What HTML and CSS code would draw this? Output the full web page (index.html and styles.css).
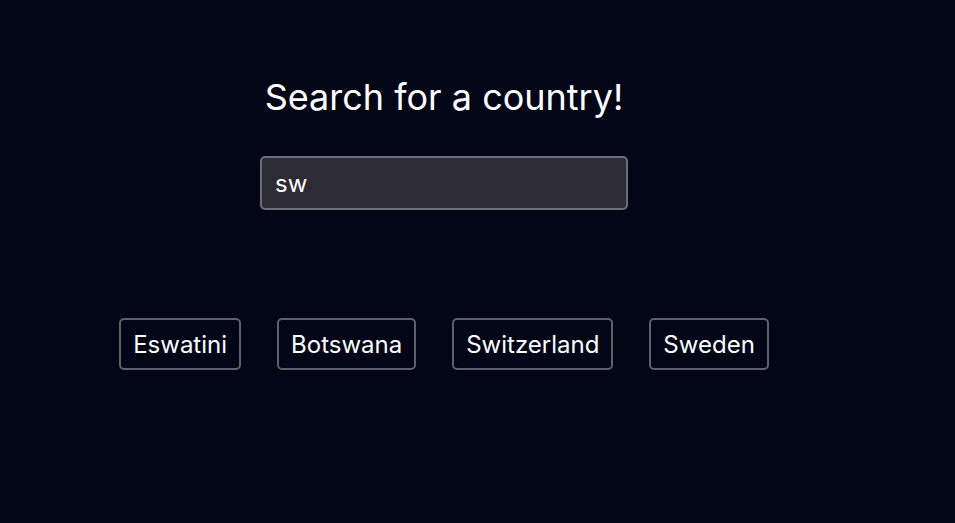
FILE: index.html
```html
<!DOCTYPE html>
<html lang="en">
<head>
<meta charset="utf-8">
<title>Country search</title>
<link rel="stylesheet" href="styles.css">
</head>
<body>
<main class="app">
  <h1 class="title">Search for a country!</h1>
  <input class="search" type="text" value="sw">
  <ul class="results">
    <li><button class="country">Eswatini</button></li>
    <li><button class="country">Botswana</button></li>
    <li><button class="country">Switzerland</button></li>
    <li><button class="country">Sweden</button></li>
  </ul>
</main>
</body>
</html>
```
FILE: styles.css
```css
html, body {
  margin: 0;
  padding: 0;
  background: #020617;
  height: 100%;
}
body {
  font-family: Inter, "Noto Sans", sans-serif;
  color: #ffffff;
}
.app {
  width: 888px;
  display: flex;
  flex-direction: column;
  align-items: center;
}
.title {
  margin: 73px 0 0;
  font-size: 36px;
  font-weight: 400;
  line-height: 48px;
}
.search {
  margin-top: 35px;
  box-sizing: border-box;
  width: 368px;
  height: 54px;
  padding: 0 13px;
  background: #2d2b36;
  border: 2px solid #6f6e76;
  border-radius: 5px;
  color: #ffffff;
  font-family: Inter, sans-serif;
  font-size: 24px;
  outline: none;
}
.results {
  list-style: none;
  margin: 108px 0 0;
  padding: 0;
  display: flex;
  gap: 36px;
}
.country {
  box-sizing: border-box;
  height: 52px;
  padding: 0 12px;
  background: transparent;
  border: 2px solid #5f6069;
  border-radius: 5px;
  color: #ffffff;
  font-family: Inter, sans-serif;
  font-size: 24px;
}
```
